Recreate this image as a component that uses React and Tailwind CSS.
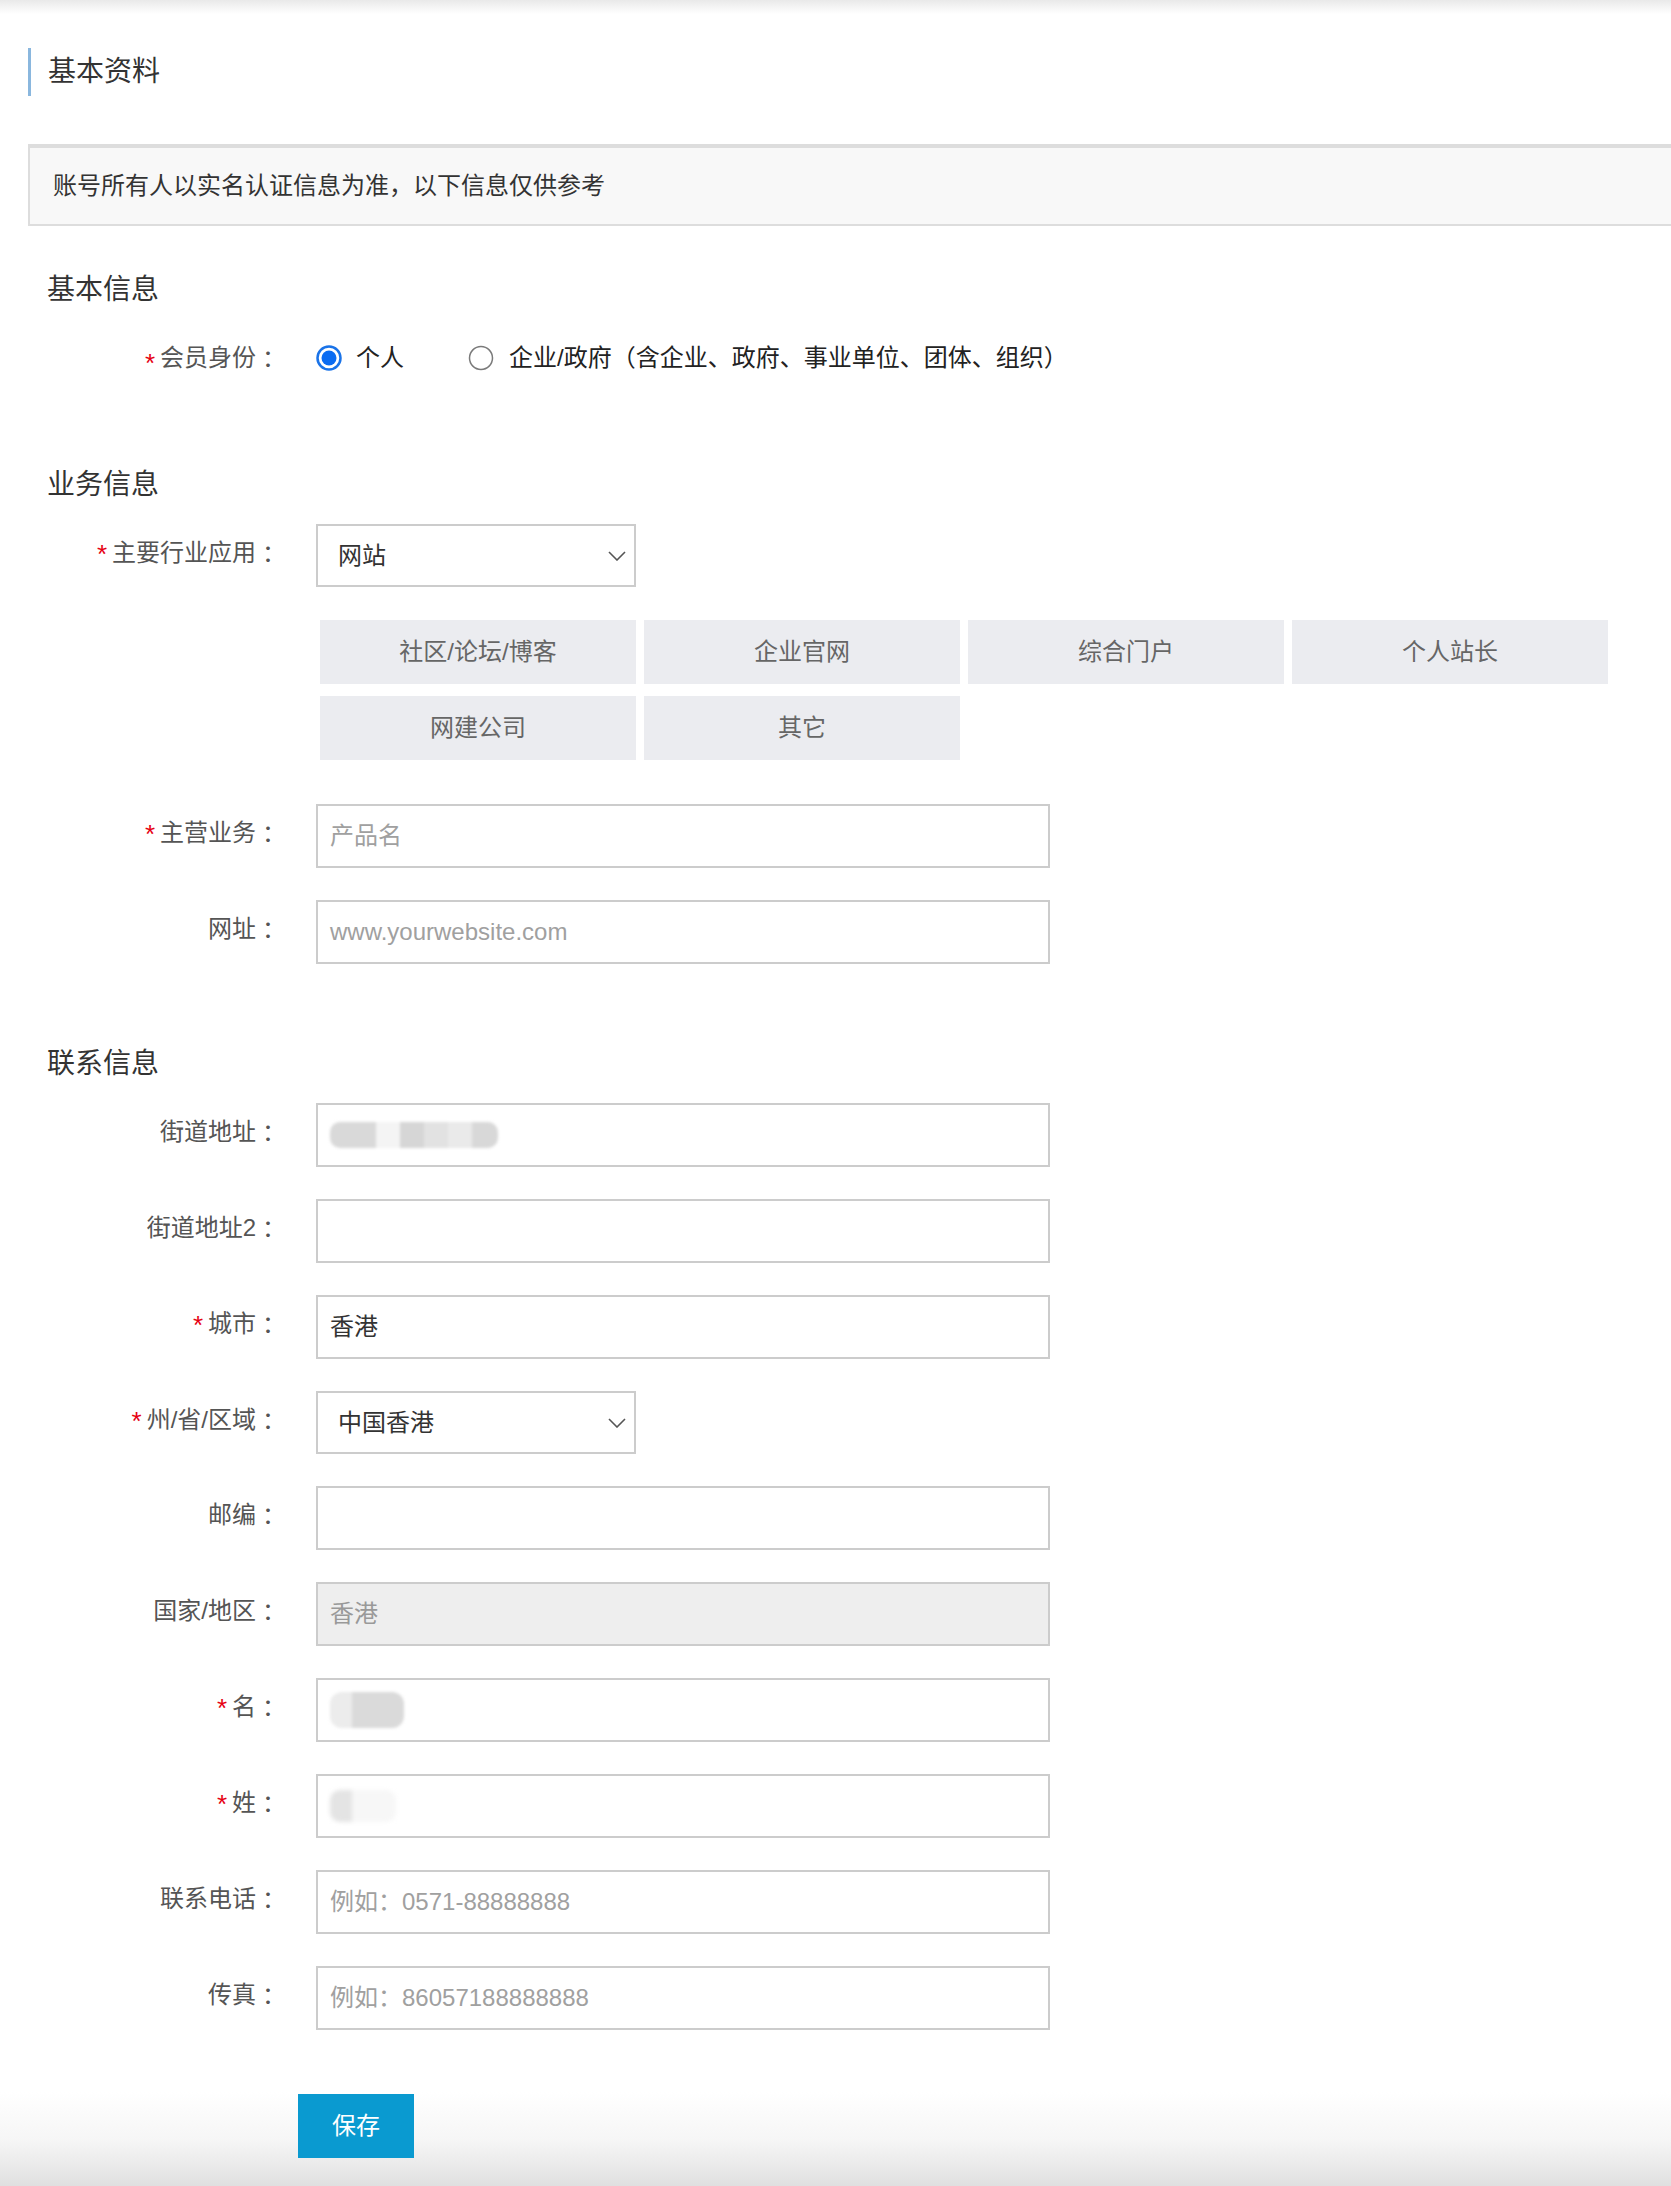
import React from "react";

const FONT = { fontFamily: '"Liberation Sans", "Noto Sans CJK SC", "Noto Sans", sans-serif' };

function Star() {
  return (
    <span className="font-['Liberation_Sans'] text-[#e60012] text-[26px] leading-[20px] h-[20px] mr-[5px] relative top-[5px]">*</span>
  );
}

function Colon() {
  return <span className="font-['Noto_Sans_CJK_TC']">：</span>;
}

function Label({ text, required }) {
  return (
    <div className="w-[252px] shrink-0 flex justify-end items-start pt-[15px] text-[24px] leading-[28px] text-[#555]">
      {required && <Star />}
      <span>{text}</span>
      <Colon />
    </div>
  );
}

function Chevron() {
  return (
    <svg width="18" height="10" viewBox="0 0 18 10" fill="none">
      <polyline points="1,1 9,9 17,1" stroke="#555" strokeWidth="1.6" fill="none" />
    </svg>
  );
}

function SelectBox({ value }) {
  return (
    <div className="w-[320px] h-[63px] border-2 border-[#ccc] bg-white flex items-center justify-between pl-[20px] pr-[8px] text-[24px] text-[#333]">
      <span>{value}</span>
      <Chevron />
    </div>
  );
}

function Input({ children, disabled }) {
  return (
    <div
      className={
        "w-[734px] h-[64px] border-2 border-[#ccc] flex items-center pl-[12px] text-[24px] " +
        (disabled ? "bg-[#eeeeee]" : "bg-white")
      }
    >
      {children}
    </div>
  );
}

function Row({ label, required, children, className = "mt-[32px]" }) {
  return (
    <div className={"flex " + className}>
      <Label text={label} required={required} />
      <div className="ml-[36px]">{children}</div>
    </div>
  );
}

function Heading({ children, className }) {
  return <div className={"h-[40px] leading-[40px] pl-[19px] text-[28px] text-[#333] " + className}>{children}</div>;
}

function Radio({ checked }) {
  return (
    <svg width="26" height="26" viewBox="0 0 26 26">
      {checked ? (
        <>
          <circle cx="13" cy="13" r="11.5" fill="#fff" stroke="#1a73e8" strokeWidth="2.5" />
          <circle cx="13" cy="13" r="7.5" fill="#0b6cf2" />
        </>
      ) : (
        <circle cx="13" cy="13" r="11.5" fill="#fff" stroke="#7a7a7a" strokeWidth="1.5" />
      )}
    </svg>
  );
}

const OPTIONS = ["社区/论坛/博客", "企业官网", "综合门户", "个人站长", "网建公司", "其它"];

export default function App() {
  return (
    <div
      style={FONT}
      className="w-full h-[2186px] overflow-hidden bg-[linear-gradient(to_bottom,#e9e9e9_0px,#ffffff_14px,#ffffff_2092px,#f6f6f6_2140px,#e0e0e0_2186px)]"
    >
      <div className="pl-[28px] pt-[48px]">
        {/* Title */}
        <div className="flex items-center h-[48px] border-l-[3px] border-[#8ab7de] pl-[17px] text-[28px] text-[#333]">
          基本资料
        </div>

        {/* Notice banner */}
        <div className="mt-[48px] h-[82px] border-t-4 border-b-2 border-l-2 border-[#dddddd] bg-[#f8f8f8] flex items-center pl-[23px] text-[24px] text-[#333]">
          账号所有人以实名认证信息为准，以下信息仅供参考
        </div>

        {/* 基本信息 */}
        <Heading className="mt-[44px]">基本信息</Heading>
        <div className="flex mt-[28px] h-[40px] items-center">
          <div className="w-[252px] shrink-0 flex justify-end items-center text-[24px] leading-[28px] text-[#555]">
            <Star />
            <span>会员身份</span>
            <Colon />
          </div>
          <div className="ml-[36px] flex items-center text-[24px] text-[#222]">
            <Radio checked />
            <span className="ml-[14px]">个人</span>
            <span className="ml-[64px] flex items-center">
              <Radio />
            </span>
            <span className="ml-[15px]">企业/政府（含企业、政府、事业单位、团体、组织）</span>
          </div>
        </div>

        {/* 业务信息 */}
        <Heading className="mt-[87px]">业务信息</Heading>
        <Row label="主要行业应用" required className="mt-[19px]">
          <SelectBox value="网站" />
          <div className="mt-[33px] ml-[4px] grid grid-cols-[repeat(4,316px)] gap-x-[8px] gap-y-[12px]">
            {OPTIONS.map((o) => (
              <div key={o} className="h-[64px] bg-[#ebecf0] flex items-center justify-center text-[24px] text-[#666]">
                {o}
              </div>
            ))}
          </div>
        </Row>
        <Row label="主营业务" required className="mt-[44px]">
          <Input>
            <span className="text-[#a0a0a0]">产品名</span>
          </Input>
        </Row>
        <Row label="网址">
          <Input>
            <span className="text-[#a0a0a0]">www.yourwebsite.com</span>
          </Input>
        </Row>

        {/* 联系信息 */}
        <Heading className="mt-[80px]">联系信息</Heading>
        <Row label="街道地址" className="mt-[19px]">
          <Input>
            <div className="flex items-center h-[26px] blur-[1.5px] rounded-[10px] overflow-hidden">
              <div className="w-[46px] h-[26px] bg-[#d9d9d9]" />
              <div className="w-[24px] h-[26px] bg-[#f4f4f4]" />
              <div className="w-[24px] h-[26px] bg-[#d6d6d6]" />
              <div className="w-[24px] h-[26px] bg-[#e2e2e2]" />
              <div className="w-[24px] h-[26px] bg-[#eaeaea]" />
              <div className="w-[26px] h-[26px] bg-[#d8d8d8]" />
            </div>
          </Input>
        </Row>
        <Row label="街道地址2">
          <Input />
        </Row>
        <Row label="城市" required>
          <Input>
            <span className="text-[#333]">香港</span>
          </Input>
        </Row>
        <Row label="州/省/区域" required>
          <SelectBox value="中国香港" />
        </Row>
        <Row label="邮编">
          <Input />
        </Row>
        <Row label="国家/地区">
          <Input disabled>
            <span className="text-[#999]">香港</span>
          </Input>
        </Row>
        <Row label="名" required>
          <Input>
            <div className="flex items-center h-[36px] blur-[1.5px] rounded-[12px] overflow-hidden">
              <div className="w-[22px] h-[36px] bg-[#ececec]" />
              <div className="w-[52px] h-[36px] bg-[#dadada]" />
            </div>
          </Input>
        </Row>
        <Row label="姓" required>
          <Input>
            <div className="flex items-center h-[32px] blur-[2px] rounded-[10px] overflow-hidden">
              <div className="w-[22px] h-[32px] bg-[#e4e4e4]" />
              <div className="w-[44px] h-[32px] bg-[#f7f7f7]" />
            </div>
          </Input>
        </Row>
        <Row label="联系电话">
          <Input>
            <span className="text-[#a0a0a0]">例如：0571-88888888</span>
          </Input>
        </Row>
        <Row label="传真">
          <Input>
            <span className="text-[#a0a0a0]">例如：86057188888888</span>
          </Input>
        </Row>

        <div className="mt-[64px] ml-[270px] w-[116px] h-[64px] bg-[#0a9ad0] flex items-center justify-center text-[24px] text-white">
          保存
        </div>
      </div>
    </div>
  );
}
